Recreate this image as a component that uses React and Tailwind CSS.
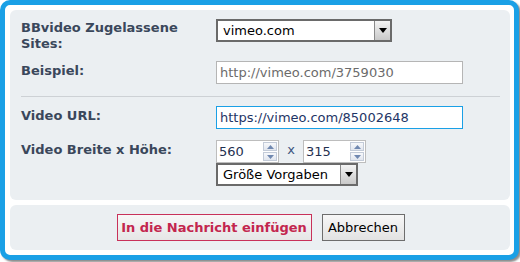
import React from "react";

const FONT = { fontFamily: '"DejaVu Sans", Verdana, sans-serif' };

function DropButton() {
  return (
    <div className="w-[16px] h-full flex items-center justify-center border-l border-[#8a8a8a] bg-gradient-to-b from-[#f4f4f4] to-[#c9c9c9]">
      <svg width="8" height="5" viewBox="0 0 8 5">
        <path d="M0 0h8L4 5z" fill="#000" />
      </svg>
    </div>
  );
}

function FakeSelect({ value, width }) {
  return (
    <div className={`${width} h-[23px] flex items-stretch border-2 border-[#6a6a6a] bg-white`}>
      <span className="flex-1 pl-[5px] text-[13px] leading-[19px] text-black">{value}</span>
      <DropButton />
    </div>
  );
}

function Spinner() {
  return (
    <div className="w-[15px] flex flex-col gap-[1px] py-[1px] pr-[1px]">
      {["M0 4h7L3.5 0z", "M0 0h7L3.5 4z"].map((d, i) => (
        <div key={i} className="flex-1 flex items-center justify-center border border-[#c3cbd8] bg-gradient-to-b from-[#f7f8fb] to-[#e1e6ee]">
          <svg width="7" height="4" viewBox="0 0 7 4">
            <path d={d} fill="#7088b0" />
          </svg>
        </div>
      ))}
    </div>
  );
}

function NumberBox({ value }) {
  return (
    <div className="w-[63px] h-[23px] flex border border-[#bdbdbd] bg-white">
      <span className="flex-1 pl-[2px] text-[13px] leading-[21px] text-[#1f3050]">{value}</span>
      <Spinner />
    </div>
  );
}

function Label({ children, className = "" }) {
  return (
    <div className={`w-[195px] shrink-0 text-[13px] leading-[16px] font-bold text-[#3a475b] ${className}`}>
      {children}
    </div>
  );
}

export default function App() {
  return (
    <div className="w-[520px] h-[262px] bg-white" style={FONT}>
      <div className="w-[519px] h-[260px] rounded-[10px] border-[5px] border-[#1aa0e6] bg-white pl-[5px] pr-[4px] py-[5px] flex flex-col gap-[5px] shadow-[2px_2px_2px_rgba(0,0,0,0.45)]">
        {/* form panel */}
        <div className="h-[190px] rounded-[6px] bg-[#ebeff2] pl-[11px] pr-[10px] pt-[9px]">
          <div className="flex items-start">
            <Label className="mt-[1px]">
              BBvideo Zugelassene
              <br />
              Sites:
            </Label>
            <FakeSelect value="vimeo.com" width="w-[176px]" />
          </div>

          <div className="flex items-start mt-[9px]">
            <Label className="mt-[2px]">Beispiel:</Label>
            <div className="w-[247px] h-[23px] border border-[#b5b5b5] bg-white pl-[3px] text-[13px] leading-[21px] text-[#6b6b6b]">
              http://vimeo.com/3759030
            </div>
          </div>

          <div className="h-px bg-[#cdd1d5] mt-[12px] mb-[9px]" />

          <div className="flex items-start">
            <Label className="mt-[2px]">Video URL:</Label>
            <div className="w-[247px] h-[23px] border border-[#1aa0e6] bg-white pl-[3px] text-[13px] leading-[21px] text-[#1e3566]">
              https://vimeo.com/85002648
            </div>
          </div>

          <div className="flex items-start mt-[11px]">
            <Label className="mt-[2px]">Video Breite x Höhe:</Label>
            <div className="flex flex-col">
              <div className="flex items-center">
                <NumberBox value="560" />
                <span className="w-[24px] text-center text-[13px] leading-[16px] text-[#3d5480] -mt-[4px]">x</span>
                <NumberBox value="315" />
              </div>
              <FakeSelect value="Größe Vorgaben" width="w-[142px]" />
            </div>
          </div>
        </div>

        {/* button panel */}
        <div className="h-[45px] rounded-[6px] bg-[#ebeff2] flex items-center justify-center gap-[10px] pl-[1px]">
          <button className="w-[195px] h-[27px] border border-[#c8315a] bg-gradient-to-b from-[#f7f7f7] to-[#e6e6e6] text-[13px] font-bold text-[#c3264e]">
            In die Nachricht einfügen
          </button>
          <button className="w-[83px] h-[27px] border border-[#6d6d6d] bg-gradient-to-b from-[#f7f7f7] to-[#e2e2e2] text-[13px] text-black">
            Abbrechen
          </button>
        </div>
      </div>
    </div>
  );
}
